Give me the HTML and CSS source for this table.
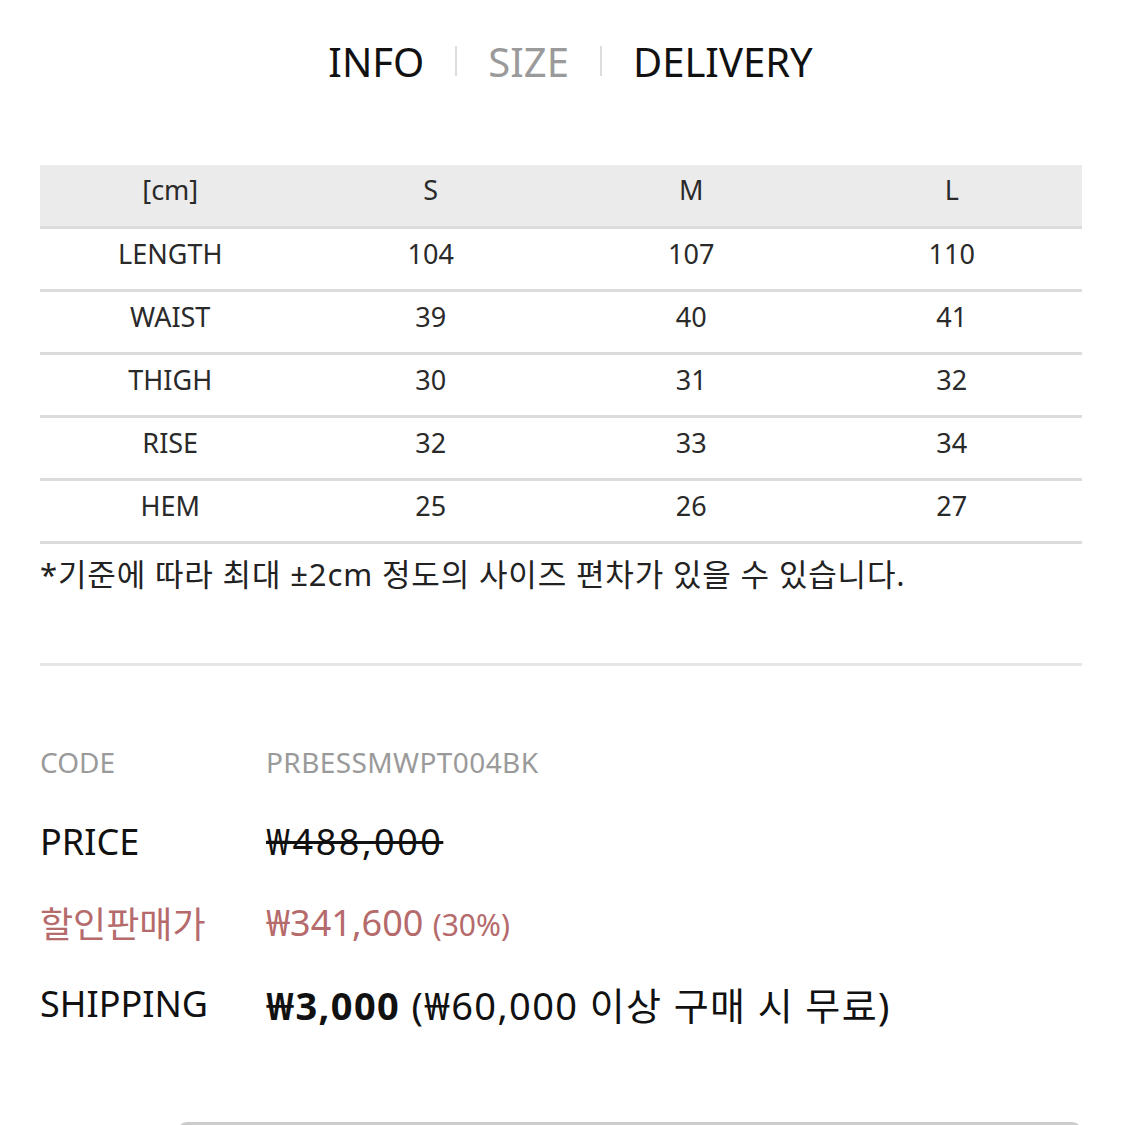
FILE: index.html
```html
<!DOCTYPE html>
<html lang="ko">
<head>
    <meta charset="UTF-8">
    <meta name="viewport" content="width=device-width, initial-scale=1.0">
    <title>상품 정보</title>
    <link rel="stylesheet" href="styles.css">
</head>
<body>
    <div class="page">
        <nav class="tabs">
            <a href="#" class="tab">INFO</a>
            <span class="tab-sep"></span>
            <a href="#" class="tab active">SIZE</a>
            <span class="tab-sep"></span>
            <a href="#" class="tab">DELIVERY</a>
        </nav>

        <table class="size-table">
            <thead>
                <tr>
                    <th>[cm]</th>
                    <th>S</th>
                    <th>M</th>
                    <th>L</th>
                </tr>
            </thead>
            <tbody>
                <tr><td>LENGTH</td><td>104</td><td>107</td><td>110</td></tr>
                <tr><td>WAIST</td><td>39</td><td>40</td><td>41</td></tr>
                <tr><td>THIGH</td><td>30</td><td>31</td><td>32</td></tr>
                <tr><td>RISE</td><td>32</td><td>33</td><td>34</td></tr>
                <tr><td>HEM</td><td>25</td><td>26</td><td>27</td></tr>
            </tbody>
        </table>
        <p class="size-note">*기준에 따라 최대 ±2cm 정도의 사이즈 편차가 있을 수 있습니다.</p>

        <hr class="divider">

        <dl class="product-info">
            <div class="info-row code">
                <dt>CODE</dt>
                <dd>PRBESSMWPT004BK</dd>
            </div>
            <div class="info-row">
                <dt>PRICE</dt>
                <dd class="old-price"><del>₩488,000</del></dd>
            </div>
            <div class="info-row sale">
                <dt>할인판매가</dt>
                <dd>₩341,600 <span class="rate">(30%)</span></dd>
            </div>
            <div class="info-row">
                <dt>SHIPPING</dt>
                <dd class="shipping"><strong>₩3,000</strong> (₩60,000 이상 구매 시 무료)</dd>
            </div>
        </dl>

        <div class="option-box">
            <div class="option-select"></div>
            <div class="option-btn"></div>
        </div>
    </div>
</body>
</html>
```

FILE: styles.css
```css
body {
    margin: 0;
    font-family: "Noto Sans", "Noto Sans CJK KR", sans-serif;
    background-color: #ffffff;
    color: #222222;
}

.page {
    padding: 0 43px 0 40px;
    height: 1125px;
    overflow: hidden;
}

.tabs {
    display: flex;
    justify-content: center;
    align-items: center;
    gap: 31px;
    padding: 32px 0 0 19px;
    height: 58px;
}

.tab {
    font-size: 40px;
    color: #111111;
    text-decoration: none;
}

.tab.active {
    color: #9a9a9a;
}

.tab-sep {
    width: 2px;
    height: 30px;
    background-color: #dddddd;
}

.size-table {
    width: 100%;
    margin-top: 75px;
    border-collapse: collapse;
    table-layout: fixed;
}

.size-table th,
.size-table td {
    text-align: center;
    font-size: 27px;
    font-weight: normal;
    color: #2a2a2a;
    border-bottom: 3px solid #dcdcdc;
    padding: 0 0 12px;
}

.size-table th {
    height: 49px;
    background-color: #ebebeb;
}

.size-table td {
    height: 48px;
}

.size-note {
    margin: 0;
    padding-top: 6px;
    font-size: 31px;
    color: #222222;
    letter-spacing: 0.85px;
}

.divider {
    margin: 68px 0 0;
    border: none;
    border-top: 3px solid #e6e6e6;
}

.product-info {
    margin: 68px 0 0;
}

.info-row {
    display: flex;
    align-items: center;
    height: 81px;
}

.info-row dt {
    width: 226px;
    font-size: 36px;
    color: #111111;
}

.info-row dd {
    margin: 0;
    font-size: 36px;
    color: #111111;
}

.info-row.code {
    height: 56px;
    margin-bottom: 11px;
}

.info-row.code dt,
.info-row.code dd {
    font-size: 28px;
    color: #9a9a9a;
}

.info-row.code dd {
    letter-spacing: 0.4px;
}

.old-price {
    letter-spacing: 2.5px;
}

.old-price del {
    text-decoration-thickness: 3px;
}

.info-row.sale dt,
.info-row.sale dd {
    color: #b56a6c;
}

.info-row.sale .rate {
    font-size: 30px;
}

.info-row dd.shipping {
    font-size: 38px;
    letter-spacing: 1.4px;
}

.info-row strong {
    font-weight: bold;
}

.option-box {
    display: flex;
    margin: 78px 0 0 137px;
    height: 60px;
    border: 3px solid #cccccc;
    border-radius: 10px;
}

.option-select {
    flex: 1;
    border-right: 3px solid #cccccc;
}

.option-btn {
    width: 84px;
}
```
